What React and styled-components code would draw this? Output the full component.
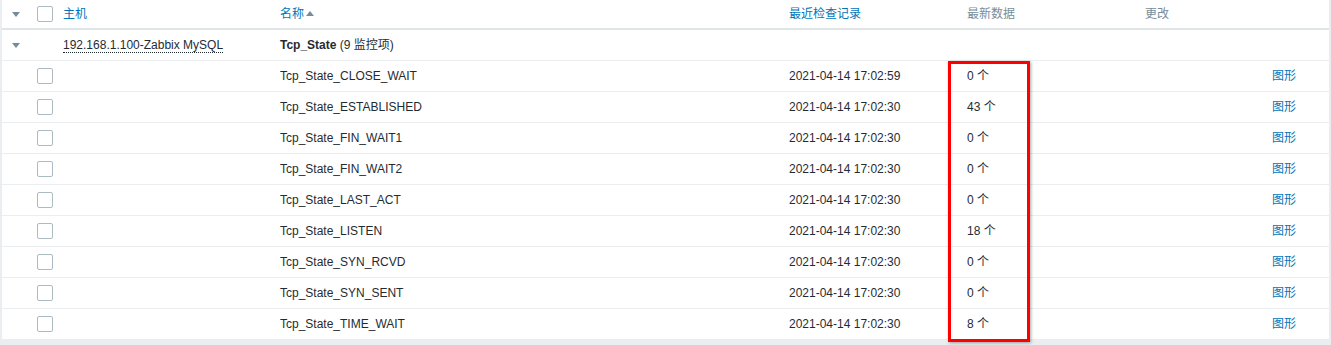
import React from "react";
import styled, { createGlobalStyle } from "styled-components";

const GlobalStyle = createGlobalStyle`
  html, body {
    margin: 0;
    padding: 0;
    background: #ebeef0;
  }
  body {
    font-family: "Liberation Sans", Arial, "Noto Sans CJK SC", sans-serif;
    font-size: 12px;
    line-height: 14px;
    color: #1f2c33;
  }
`;

const Page = styled.div`
  position: relative;
  width: 1331px;
  height: 345px;
  padding: 0 2px;
  box-sizing: border-box;
`;

const Table = styled.div`
  background: #ffffff;
  display: grid;
  grid-template-columns: 28px 28px 217px 509px 178px 178px 127px 1fr;
`;

const Row = styled.div`
  display: contents;
  & > * {
    height: ${(p) => (p.$head ? "28px" : "30px")};
    border-bottom: ${(p) => (p.$head ? "2px solid #dfe4e7" : "1px solid #ebeef0")};
  }
`;

const Cell = styled.div`
  display: flex;
  align-items: center;
  padding-left: ${(p) => p.$pad ?? 5}px;
  white-space: nowrap;
  color: ${(p) => p.$color || "#1f2c33"};
  justify-content: ${(p) => (p.$center ? "center" : "flex-start")};
`;

const Text = styled.span`
  display: block;
  height: 14px;
  line-height: 14px;
  margin-top: ${(p) => p.$shift ?? -1}px;
`;

const Toggle = styled.span`
  width: 0;
  height: 0;
  border-left: 4px solid transparent;
  border-right: 4px solid transparent;
  border-top: 5px solid #768d99;
  margin-top: 1px;
`;

const Check = styled.span`
  width: 16px;
  height: 16px;
  box-sizing: border-box;
  border: 1px solid #acbbc2;
  border-radius: 2px;
  background: #fff;
`;

const HeadLink = styled.span`
  color: #0275b8;
  display: inline-flex;
  align-items: center;
  height: 14px;
  margin-top: -1px;
`;

const SortArrow = styled.span`
  width: 0;
  height: 0;
  margin-left: 2px;
  border-left: 4px solid transparent;
  border-right: 4px solid transparent;
  border-bottom: 5px solid #768d99;
`;

const HostLink = styled.span`
  color: #1f2c33;
  border-bottom: 1px dotted #1f2c33;
  line-height: 14px;
`;

const Group = styled.span`
  b {
    font-weight: bold;
  }
`;

const GraphLink = styled.span`
  color: #0275b8;
`;

const Mark = styled.div`
  position: absolute;
  left: 948px;
  top: 61px;
  width: 82px;
  height: 281px;
  box-sizing: border-box;
  border: 3px solid #ff0000;
  box-shadow: 1px 1px 3px rgba(0, 0, 0, 0.35);
  pointer-events: none;
`;

const items = [
  ["Tcp_State_CLOSE_WAIT", "2021-04-14 17:02:59", "0 个"],
  ["Tcp_State_ESTABLISHED", "2021-04-14 17:02:30", "43 个"],
  ["Tcp_State_FIN_WAIT1", "2021-04-14 17:02:30", "0 个"],
  ["Tcp_State_FIN_WAIT2", "2021-04-14 17:02:30", "0 个"],
  ["Tcp_State_LAST_ACT", "2021-04-14 17:02:30", "0 个"],
  ["Tcp_State_LISTEN", "2021-04-14 17:02:30", "18 个"],
  ["Tcp_State_SYN_RCVD", "2021-04-14 17:02:30", "0 个"],
  ["Tcp_State_SYN_SENT", "2021-04-14 17:02:30", "0 个"],
  ["Tcp_State_TIME_WAIT", "2021-04-14 17:02:30", "8 个"],
];

export default function App() {
  return (
    <Page>
      <GlobalStyle />
      <Table>
        <Row $head>
          <Cell $pad={0} $center><Toggle /></Cell>
          <Cell $pad={7}><Check /></Cell>
          <Cell><HeadLink>主机</HeadLink></Cell>
          <Cell><HeadLink>名称<SortArrow /></HeadLink></Cell>
          <Cell><HeadLink>最近检查记录</HeadLink></Cell>
          <Cell $color="#768d99"><Text>最新数据</Text></Cell>
          <Cell $color="#768d99"><Text>更改</Text></Cell>
          <Cell />
        </Row>
        <Row>
          <Cell $pad={0} $center><Toggle /></Cell>
          <Cell />
          <Cell><HostLink>192.168.1.100-Zabbix MySQL</HostLink></Cell>
          <Cell><Text><Group><b>Tcp_State</b> (9 监控项)</Group></Text></Cell>
          <Cell />
          <Cell />
          <Cell />
          <Cell />
        </Row>
        {items.map(([name, time, value]) => (
          <Row key={name}>
            <Cell />
            <Cell $pad={7}><Check /></Cell>
            <Cell />
            <Cell><Text>{name}</Text></Cell>
            <Cell><Text>{time}</Text></Cell>
            <Cell><Text>{value}</Text></Cell>
            <Cell />
            <Cell><Text><GraphLink>图形</GraphLink></Text></Cell>
          </Row>
        ))}
      </Table>
      <Mark />
    </Page>
  );
}
